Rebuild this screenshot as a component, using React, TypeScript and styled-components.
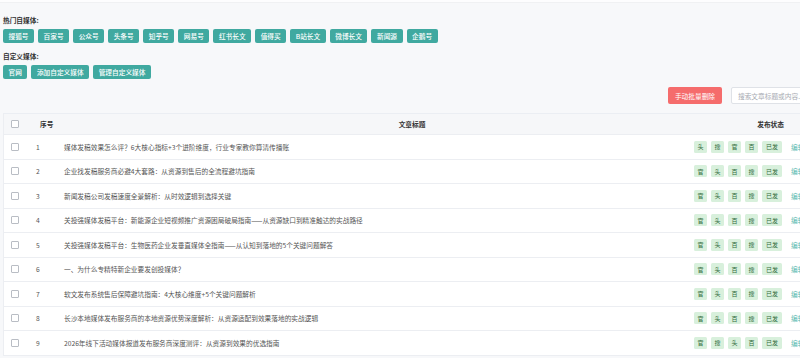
import styled, { createGlobalStyle } from 'styled-components'

const GlobalStyle = createGlobalStyle`
  html, body {
    margin: 0;
    padding: 0;
    background: #f7f8fa;
    overflow: hidden;
  }
  body {
    font-family: "Noto Sans CJK SC", "Noto Sans", sans-serif;
    font-size: 6.7px;
    color: #555;
  }
`

const TopStrip = styled.div`
  height: 2px;
  background: #fdfdfe;
  border-bottom: 1px solid #f0f1f3;
`

const Page = styled.div`
  width: 838px;
  padding: 12px 3px 0;
`

const Label = styled.div`
  font-size: 6.7px;
  font-weight: 700;
  color: #333;
  line-height: 10px;
  margin-bottom: 4px;
`

const ButtonRow = styled.div`
  display: flex;
  gap: 4px;
  margin-bottom: 8px;
`

const MediaButton = styled.button`
  height: 14px;
  padding: 0 5.5px;
  border: none;
  border-radius: 2px;
  background: #40a9a0;
  color: #fff;
  font-family: inherit;
  font-size: 6.7px;
  font-weight: 500;
  line-height: 14px;
  white-space: nowrap;
`

const Toolbar = styled.div`
  display: flex;
  justify-content: flex-end;
  align-items: center;
  gap: 9px;
  margin-top: 1px;
  margin-bottom: 9px;
`

const DangerButton = styled.button`
  height: 17px;
  width: 54px;
  padding: 0;
  border: none;
  border-radius: 2px;
  background: #f56c6c;
  color: #fff;
  font-family: inherit;
  font-size: 6.7px;
`

const Search = styled.input`
  box-sizing: border-box;
  width: 110px;
  height: 17px;
  padding: 0 6px;
  border: 1px solid #dfe2e7;
  border-radius: 2px;
  background: #fff;
  font-family: inherit;
  font-size: 6.7px;
  outline: none;
  &::placeholder {
    color: #a8abb2;
  }
`

const Table = styled.div`
  background: #fff;
  border-left: 1px solid #eceef2;
`

const Row = styled.div<{ $head?: boolean }>`
  display: grid;
  grid-template-columns: 27px 28px 628px 100px 1fr;
  align-items: center;
  height: ${p => (p.$head ? '22px' : '24.5px')};
  box-sizing: border-box;
  border-top: ${p => (p.$head ? '1px solid #ebeef3' : 'none')};
  border-bottom: 1px solid #eceef2;
  background: ${p => (p.$head ? '#f6f7f9' : '#fff')};
  color: ${p => (p.$head ? '#333' : '#555')};
  font-weight: ${p => (p.$head ? 700 : 400)};
`

const Cell = styled.div<{ $align?: string; $pad?: string }>`
  display: flex;
  align-items: center;
  justify-content: ${p => p.$align || 'flex-start'};
  padding: ${p => p.$pad || '0'};
  white-space: nowrap;
  overflow: hidden;
`

const Check = styled.span`
  display: inline-block;
  width: 6px;
  height: 6px;
  border: 1px solid #b9bdc4;
  border-radius: 1px;
  background: #fff;
`

const Tags = styled.div`
  display: flex;
  gap: 4px;
`

const Tag = styled.span<{ $wide?: boolean }>`
  display: inline-flex;
  align-items: center;
  justify-content: center;
  width: ${p => (p.$wide ? '20px' : '13px')};
  height: 12px;
  border-radius: 1.5px;
  background: #d8f0dc;
  color: #2f6b3a;
  font-size: 6px;
`

const EditLink = styled.span`
  color: #5bbab1;
`

const hotMedia = ['搜狐号', '百家号', '公众号', '头条号', '知乎号', '网易号', '红书长文', '值得买', 'B站长文', '微博长文', '新闻源', '企鹅号']
const customMedia = ['官网', '添加自定义媒体', '管理自定义媒体']

const std = ['官', '头', '百', '搜']
const articles = [
  { title: '媒体发稿效果怎么评？6大核心指标+3个进阶维度，行业专家教你算清传播账', tags: ['头', '搜', '官', '百'] },
  { title: '企业找发稿服务商必避4大套路：从资源到售后的全流程避坑指南', tags: std },
  { title: '新闻发稿公司发稿速度全景解析：从时效逻辑到选择关键', tags: std },
  { title: '关投强媒体发稿平台：新能源企业短视频推广资源困局破局指南——从资源缺口到精准触达的实战路径', tags: std },
  { title: '关投强媒体发稿平台：生物医药企业发垂直媒体全指南——从认知到落地的5个关键问题解答', tags: std },
  { title: '一、为什么专精特新企业要发创投媒体？', tags: std },
  { title: '软文发布系统售后保障避坑指南：4大核心维度+5个关键问题解析', tags: std },
  { title: '长沙本地媒体发布服务商的本地资源优势深度解析：从资源适配到效果落地的实战逻辑', tags: std },
  { title: '2026年线下活动媒体报道发布服务商深度测评：从资源到效果的优选指南', tags: ['官', '搜', '头', '百'] },
]

export default function App() {
  return (
    <>
      <GlobalStyle />
      <TopStrip />
      <Page>
        <Label>热门自媒体:</Label>
        <ButtonRow>
          {hotMedia.map(m => (
            <MediaButton key={m}>{m}</MediaButton>
          ))}
        </ButtonRow>
        <Label>自定义媒体:</Label>
        <ButtonRow>
          {customMedia.map(m => (
            <MediaButton key={m}>{m}</MediaButton>
          ))}
        </ButtonRow>

        <Toolbar>
          <DangerButton>手动批量删除</DangerButton>
          <Search placeholder="搜索文章标题或内容..." />
        </Toolbar>

        <Table>
          <Row $head>
            <Cell $pad="0 0 0 7px"><Check /></Cell>
            <Cell $pad="0 0 0 9px">序号</Cell>
            <Cell $align="center" $pad="0 0 0 78px">文章标题</Cell>
            <Cell $align="flex-end" $pad="0 3px 0 0">发布状态</Cell>
            <Cell $align="center" $pad="0 0 0 14px">操作</Cell>
          </Row>
          {articles.map((a, i) => (
            <Row key={i}>
              <Cell $pad="0 0 0 7px"><Check /></Cell>
              <Cell $pad="0 0 0 5px">{i + 1}</Cell>
              <Cell $pad="0 0 0 5px">{a.title}</Cell>
              <Cell $align="flex-end" $pad="0 5px 0 0">
                <Tags>
                  {a.tags.map(t => (
                    <Tag key={t}>{t}</Tag>
                  ))}
                  <Tag $wide>已发</Tag>
                </Tags>
              </Cell>
              <Cell $pad="0 0 0 4px"><EditLink>编辑</EditLink></Cell>
            </Row>
          ))}
        </Table>
      </Page>
    </>
  )
}
